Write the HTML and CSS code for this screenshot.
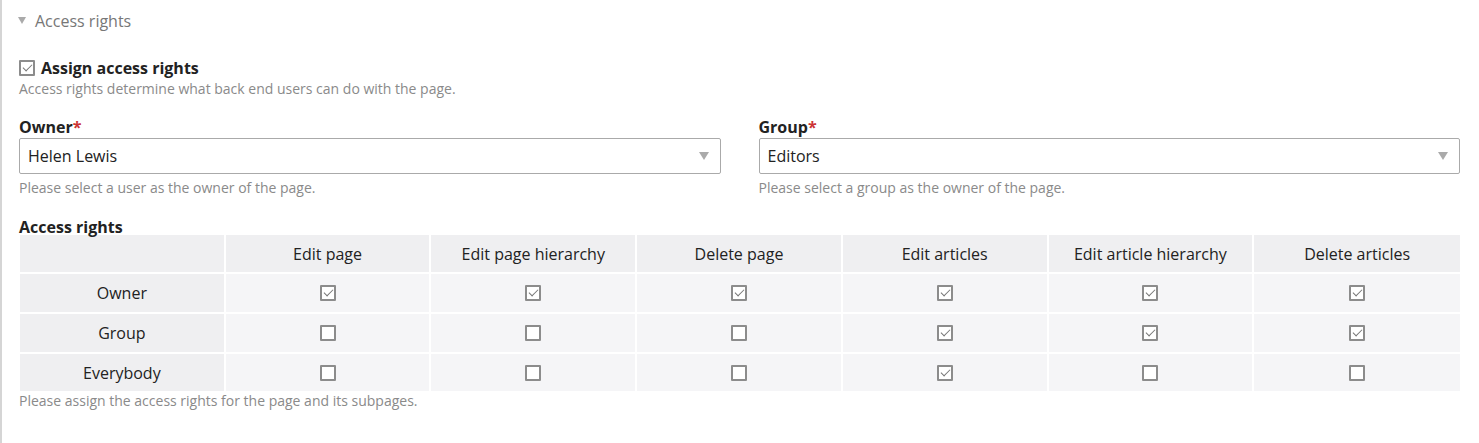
FILE: index.html
```html
<!DOCTYPE html>
<html lang="en">
<head>
<meta charset="utf-8">
<title>Access rights</title>
<link rel="stylesheet" href="styles.css">
</head>
<body>
<fieldset class="panel">
  <div class="legend"><span class="tri"></span>Access rights</div>

  <div class="widget assign">
    <label class="check-label"><span class="cb checked"></span>Assign access rights</label>
    <p class="help">Access rights determine what back end users can do with the page.</p>
  </div>

  <div class="row2">
    <div class="widget">
      <div class="label">Owner<span class="req">*</span></div>
      <div class="select"><span>Helen Lewis</span><span class="arrow"></span></div>
      <p class="help">Please select a user as the owner of the page.</p>
    </div>
    <div class="widget">
      <div class="label">Group<span class="req">*</span></div>
      <div class="select"><span>Editors</span><span class="arrow"></span></div>
      <p class="help">Please select a group as the owner of the page.</p>
    </div>
  </div>

  <div class="widget rights">
    <div class="label">Access rights</div>
    <table class="grid">
      <thead>
        <tr><th class="corner"></th><th>Edit page</th><th>Edit page hierarchy</th><th>Delete page</th><th>Edit articles</th><th>Edit article hierarchy</th><th>Delete articles</th></tr>
      </thead>
      <tbody>
        <tr><th>Owner</th><td><span class="cb checked"></span></td><td><span class="cb checked"></span></td><td><span class="cb checked"></span></td><td><span class="cb checked"></span></td><td><span class="cb checked"></span></td><td><span class="cb checked"></span></td></tr>
        <tr><th>Group</th><td><span class="cb"></span></td><td><span class="cb"></span></td><td><span class="cb"></span></td><td><span class="cb checked"></span></td><td><span class="cb checked"></span></td><td><span class="cb checked"></span></td></tr>
        <tr><th>Everybody</th><td><span class="cb"></span></td><td><span class="cb"></span></td><td><span class="cb"></span></td><td><span class="cb checked"></span></td><td><span class="cb"></span></td><td><span class="cb"></span></td></tr>
      </tbody>
    </table>
    <p class="help">Please assign the access rights for the page and its subpages.</p>
  </div>
</fieldset>
</body>
</html>
```
FILE: styles.css
```css
html, body {
  margin: 0;
  padding: 0;
  background: #fff;
}
body {
  font-family: "Open Sans", "Noto Sans", sans-serif;
  color: #222;
  font-size: 16px;
}
.panel {
  margin: 0;
  padding: 0 19px 40px 19px;
  border: 0;
  border-left: 2px solid #d5d5d5;
  min-height: 443px;
  box-sizing: border-box;
}
.legend {
  display: flex;
  align-items: center;
  height: 42px;
  color: #777;
  font-size: 16px;
  margin-left: -3px;
}
.tri {
  width: 0;
  height: 0;
  border-left: 4.5px solid transparent;
  border-right: 4.5px solid transparent;
  border-top: 7px solid #aaa;
  margin-right: 9px;
  margin-top: -2px;
}
.widget { margin: 0; }
.assign { margin-top: 16px; }
.check-label {
  display: flex;
  align-items: center;
  font-weight: 700;
  height: 20px;
  margin-left: -2px;
}
.check-label .cb { margin-right: 6px; }
.help {
  margin: 1px 0 0 -2px;
  font-size: 14px;
  color: #8a8a8a;
  line-height: 18px;
}
.assign .help { margin-top: 2px; }
.row2 {
  display: grid;
  grid-template-columns: 1fr 1fr;
  column-gap: 38px;
  margin-top: 18px;
  margin-left: -2px;
}
.row2 .help { margin-left: 0; margin-top: 5px; }
.label {
  font-weight: 700;
  line-height: 22px;
}
.req { color: #c33; }
.select {
  height: 36px;
  box-sizing: border-box;
  border: 1px solid #aaa;
  border-radius: 2px;
  display: flex;
  align-items: center;
  justify-content: space-between;
  padding: 0 11px 0 8px;
}
.arrow {
  width: 0;
  height: 0;
  border-left: 5px solid transparent;
  border-right: 5px solid transparent;
  border-top: 8px solid #aaa;
}
.rights { margin-top: 19px; margin-left: -1px; }
.rights .label { margin-left: -1px; margin-bottom: -3px; }
.rights .help { margin-left: -1px; margin-top: 1px; }
.grid {
  width: 100%;
  border-collapse: separate;
  border-spacing: 0;
  table-layout: fixed;
}
.grid th, .grid td {
  text-align: center;
  font-weight: 400;
  border-right: 2px solid #fff;
  border-bottom: 2px solid #fff;
  padding: 0;
}
.grid th:last-child, .grid td:last-child { border-right: 0; }
.grid tbody tr:last-child th, .grid tbody tr:last-child td { border-bottom: 0; height: 37px; }
.grid thead th {
  background: #efeff1;
  height: 37px;
}
.grid tbody th {
  background: #efeff1;
  height: 38px;
}
.grid td {
  background: #f5f5f7;
  height: 38px;
  line-height: 0;
}
.cb {
  display: inline-block;
  width: 16px;
  height: 16px;
  box-sizing: border-box;
  border: 2px solid #8c8c8c;
  border-radius: 1px;
  background: #fff;
  vertical-align: top;
  position: relative;
}
.check-label .cb { vertical-align: middle; }
.cb.checked::after {
  content: "";
  position: absolute;
  left: 2px;
  top: 2px;
  width: 8px;
  height: 4px;
  border-left: 1.5px solid #777;
  border-bottom: 1.5px solid #777;
  transform: rotate(-45deg);
  transform-origin: 50% 50%;
}
```
